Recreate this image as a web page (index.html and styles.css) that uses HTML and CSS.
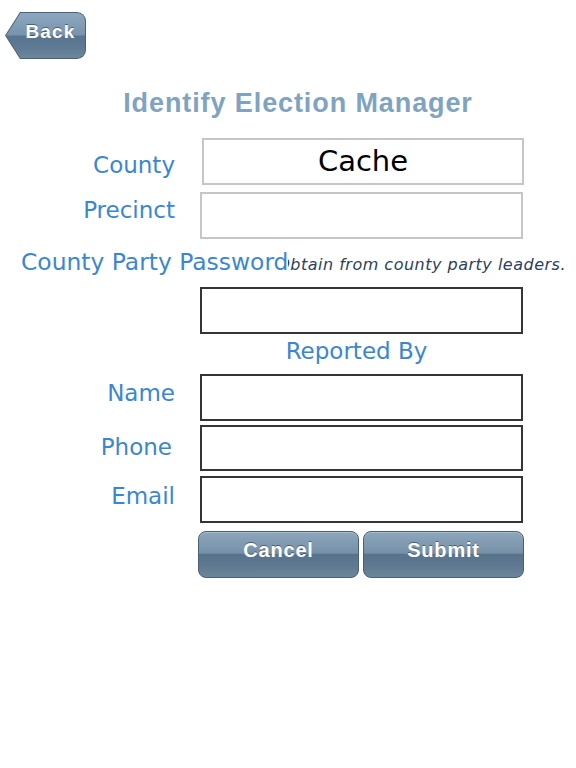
FILE: index.html
```html
<!DOCTYPE html>
<html lang="en">
<head>
<meta charset="utf-8">
<title>Identify Election Manager</title>
<link rel="stylesheet" href="styles.css">
</head>
<body>
<div class="page">
  <header class="topbar">
    <button class="back" type="button"><span class="back-face">Back</span></button>
  </header>
  <h1 class="title">Identify Election Manager</h1>
  <div class="form">
    <div class="row">
      <label class="label label-county">County</label>
      <div class="field field-light field-county">Cache</div>
    </div>
    <div class="row row-precinct">
      <label class="label label-precinct">Precinct</label>
      <div class="field field-light"></div>
    </div>
    <div class="pass-row">
      <span class="pass-label">County Party Password</span>
      <div class="hint"><span class="hint-text">Obtain from county party leaders.</span></div>
    </div>
    <div class="row">
      <span class="label"></span>
      <div class="field field-dark"></div>
    </div>
    <div class="row">
      <span class="label"></span>
      <div class="section">Reported By</div>
    </div>
    <div class="row">
      <label class="label label-name">Name</label>
      <div class="field field-dark"></div>
    </div>
    <div class="row row-phone">
      <label class="label label-phone">Phone</label>
      <div class="field field-dark field-short"></div>
    </div>
    <div class="row row-email">
      <label class="label label-email">Email</label>
      <div class="field field-dark"></div>
    </div>
    <div class="actions">
      <button class="btn" type="button">Cancel</button>
      <button class="btn" type="button">Submit</button>
    </div>
  </div>
</div>
</body>
</html>
```
FILE: styles.css
```css
* { box-sizing: border-box; }
html, body { margin: 0; padding: 0; background: #ffffff; }
body { width: 576px; height: 768px; overflow: hidden; font-family: "DejaVu Sans", "Open Sans", sans-serif; }

.page { display: flex; flex-direction: column; }

.topbar { padding: 12px 0 0 5px; display: flex; }

.back {
  width: 81px; height: 47px; padding: 1px; border: 0; margin: 0;
  background: #4a6075;
  border-radius: 0 9px 9px 0;
  clip-path: polygon(15px 0, 100% 0, 100% 100%, 15px 100%, 0 50%);
  display: flex; cursor: pointer;
}
.back-face {
  flex: 1;
  display: flex; align-items: center; justify-content: center;
  padding: 0 0 7px 10px;
  border-radius: 0 8px 8px 0;
  clip-path: polygon(14.5px 0, 100% 0, 100% 100%, 14.5px 100%, 0 50%);
  background: linear-gradient(to bottom, #8ca8c0 0%, #7893ac 49%, #587590 51%, #5c7892 72%, #6c869c 100%);
  color: #ffffff;
  font-family: "Liberation Sans", Arial, sans-serif;
  font-weight: bold; font-size: 19px; letter-spacing: 1.2px;
  text-shadow: 0 -1px 0 rgba(30, 45, 60, 0.55);
}

.title {
  margin: 30px 0 21px 0; padding-left: 20px;
  text-align: center;
  font-family: "Liberation Sans", Arial, sans-serif;
  font-weight: bold; font-size: 27px; line-height: 28px; letter-spacing: 0.9px;
  color: #80a3c1;
}

.form { display: flex; flex-direction: column; }

.row { display: flex; }
.row-precinct { margin-top: 7px; }
.row-phone { margin-top: 4px; }
.row-email { margin-top: 5px; }

.label {
  flex: 0 0 200px; padding-right: 25px;
  text-align: right;
  font-size: 23px; line-height: 24px;
  color: #3a87cf;
}
.label-county { padding-top: 15px; }
.label-precinct { padding-top: 6px; }
.label-name { padding-top: 7px; }
.label-phone { padding-top: 10px; padding-right: 28px; }
.label-email { padding-top: 8px; }

.field {
  width: 323px; height: 47px;
  background: #ffffff;
  display: flex; align-items: center; justify-content: center;
}
.field-light { border: 2px solid #c6c6c6; }
.field-dark { border: 2px solid #353535; }
.field-short { height: 46px; }
.field-county {
  margin-left: 2px; width: 322px;
  font-size: 29px; color: #000000; padding-bottom: 2px;
}

.pass-row { display: flex; height: 48px; align-items: center; padding: 0 10px 0 21px; }
.pass-label {
  flex: 0 0 auto; white-space: nowrap;
  font-size: 23.4px; color: #3a87cf;
  padding-bottom: 2px;
}
.hint { flex: 1; min-width: 0; overflow: hidden; display: flex; justify-content: flex-end; }
.hint-text {
  flex: 0 0 auto; white-space: nowrap;
  font-style: italic; font-size: 16px; letter-spacing: 0.5px; color: #2d405c;
  padding-top: 3px;
}

.section {
  width: 323px; height: 40px;
  padding: 5px 10px 0 0;
  text-align: center;
  font-size: 23px; line-height: 24px; color: #3a87cf;
}

.actions { display: flex; gap: 4px; margin: 8px 0 0 198px; }
.btn {
  width: 161px; height: 47px; margin: 0; padding: 0 0 8px 0;
  border: 1px solid #4a6073; border-radius: 8px;
  background: linear-gradient(to bottom, #8ca7bc 0%, #7690a7 47%, #58738c 50%, #5c778f 72%, #6c859a 100%);
  color: #ffffff;
  font-family: "Liberation Sans", Arial, sans-serif;
  font-weight: bold; font-size: 20px; letter-spacing: 0.8px;
  text-shadow: 0 -1px 0 rgba(30, 45, 60, 0.55);
  box-shadow: inset 0 1px 0 rgba(255,255,255,0.25);
  cursor: pointer;
}
```
